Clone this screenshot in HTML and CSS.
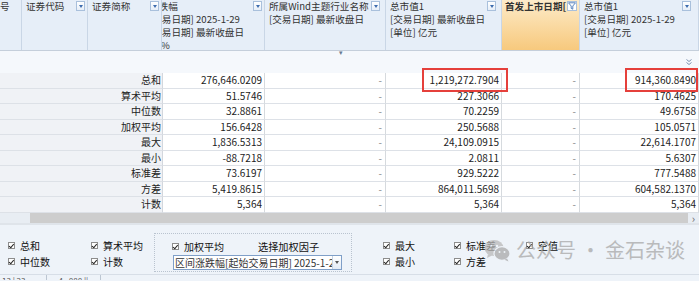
FILE: index.html
```html
<!DOCTYPE html>
<html lang="zh-CN">
  <head>
    <meta charset="UTF-8">
    <title>统计汇总</title>
    <link rel="stylesheet" href="styles.css">
  </head>
  <body>

    <div class="sheet">
      <div class="head">
        <div class="hcell c-no">号</div>
        <div class="hcell">证券代码<i class="dd"></i></div>
        <div class="hcell">证券简称<i class="dd"></i></div>
        <div class="hcell">
          <div class="shift">涨跌幅<br>[交易日期] 2025-1-29<br>[交易日期] 最新收盘日<br><span class="pct">%</span></div>
          <i class="dd"></i>
        </div>
        <div class="hcell">所属Wind主题行业名称<br>[交易日期] 最新收盘日<i class="dd dd-5"></i></div>
        <div class="hcell">总市值1<br>[交易日期] 最新收盘日<br>[单位] 亿元<i class="dd dd-5"></i></div>
        <div class="hcell hot"><b>首发上市日期[</b>
          <i class="filter">
            <svg width="8" height="8" viewBox="0 0 8 8"><path d="M0.5 0.8h7L4.8 4v3.2L3.2 6.4V4z" fill="none" stroke="#4a78b8" stroke-width="0.9"/></svg>
          </i>
        </div>
        <div class="hcell">总市值1<br>[交易日期] 2025-1-29<br>[单位] 亿元<i class="dd dd-7"></i></div>
      </div>

      <div class="subhead">
        <span class="tick">▾</span>
        <span class="collapse">
          <svg width="8" height="8" viewBox="0 0 8 8"><path d="M1.5 1.5l2.5 2 2.5-2M1.5 4.5l2.5 2 2.5-2" fill="none" stroke="#7d93b0" stroke-width="1"/></svg>
        </span>
      </div>

      <div class="rows">
        <div class="row"><div class="lbl">总和</div><div class="num">276,646.0209</div><div class="num dash">-</div><div class="num">1,219,272.7904</div><div class="num dash">-</div><div class="num">914,360.8490</div></div>
        <div class="row"><div class="lbl">算术平均</div><div class="num">51.5746</div><div class="num dash">-</div><div class="num">227.3066</div><div class="num dash">-</div><div class="num">170.4625</div></div>
        <div class="row"><div class="lbl">中位数</div><div class="num">32.8861</div><div class="num dash">-</div><div class="num">70.2259</div><div class="num dash">-</div><div class="num">49.6758</div></div>
        <div class="row"><div class="lbl">加权平均</div><div class="num">156.6428</div><div class="num dash">-</div><div class="num">250.5688</div><div class="num dash">-</div><div class="num">105.0571</div></div>
        <div class="row"><div class="lbl">最大</div><div class="num">1,836.5313</div><div class="num dash">-</div><div class="num">24,109.0915</div><div class="num dash">-</div><div class="num">22,614.1707</div></div>
        <div class="row"><div class="lbl">最小</div><div class="num">-88.7218</div><div class="num dash">-</div><div class="num">2.0811</div><div class="num dash">-</div><div class="num">5.6307</div></div>
        <div class="row"><div class="lbl">标准差</div><div class="num">73.6197</div><div class="num dash">-</div><div class="num">929.5222</div><div class="num dash">-</div><div class="num">777.5488</div></div>
        <div class="row"><div class="lbl">方差</div><div class="num">5,419.8615</div><div class="num dash">-</div><div class="num">864,011.5698</div><div class="num dash">-</div><div class="num">604,582.1370</div></div>
        <div class="row"><div class="lbl">计数</div><div class="num">5,364</div><div class="num dash">-</div><div class="num">5,364</div><div class="num dash">-</div><div class="num">5,364</div></div>
      </div>

      <div class="hscroll">
        <div class="track-left"></div>
        <div class="thumb"></div>
        <div class="arrow">›</div>
      </div>

      <!-- highlight marks -->
      <div class="mark mark-a"></div>
      <div class="mark mark-b"></div>
    </div>

    <div class="panel">
      <div class="opts">
        <div class="col col-1">
          <label><i class="cb"></i>总和</label>
          <label><i class="cb"></i>中位数</label>
        </div>
        <div class="col col-2">
          <label><i class="cb"></i>算术平均</label>
          <label><i class="cb"></i>计数</label>
        </div>
        <div class="group">
          <div class="group-top">
            <label><i class="cb"></i>加权平均</label>
            <span class="factor">选择加权因子</span>
          </div>
          <div class="select">
            <span class="select-text">区间涨跌幅[起始交易日期] 2025-1-29</span>
            <span class="select-btn"></span>
          </div>
        </div>
        <div class="col col-3">
          <label><i class="cb"></i>最大</label>
          <label><i class="cb"></i>最小</label>
        </div>
        <div class="col col-4">
          <label><i class="cb"></i>标准差</label>
          <label><i class="cb"></i>方差</label>
        </div>
        <div class="col col-5">
          <label><i class="cb"></i>空值</label>
        </div>
      </div>
      <div class="status">
        <span>13 | 23</span>
        <span class="tab">4 : 888 ||</span>
      </div>

      <div class="watermark">
        <svg width="27" height="23" viewBox="0 0 27 23">
          <ellipse cx="10" cy="9" rx="9.5" ry="8" fill="#b9b9b9"/>
          <path d="M4 15l-1 4 5-2.5z" fill="#b9b9b9"/>
          <ellipse cx="18" cy="14.5" rx="8" ry="6.8" fill="#a9a9a9" stroke="#eef3f9" stroke-width="1.2"/>
          <path d="M23 19.5l1.5 3-4-1.8z" fill="#a9a9a9"/>
          <circle cx="7" cy="7" r="1.2" fill="#eef3f9"/>
          <circle cx="13" cy="7" r="1.2" fill="#eef3f9"/>
          <circle cx="15.5" cy="13" r="1" fill="#eef3f9"/>
          <circle cx="20.5" cy="13" r="1" fill="#eef3f9"/>
        </svg>
        <span>公众号 · 金石杂谈</span>
      </div>
    </div>

  </body>
</html>
```

FILE: styles.css
```css
/* Base */
* {
  box-sizing: border-box;
}

body {
  margin: 0;
  width: 699px;
  height: 281px;
  overflow: hidden;
  font-family: "Noto Sans CJK SC", "Liberation Sans", sans-serif;
  font-size: 10px;
  color: #222;
  background-color: #eef3f9;
}

/* Sheet */
.sheet {
  position: relative;
  background-color: #fff;
}

.head {
  display: grid;
  grid-template-columns: 22px 66px 74px 103px 121px 116px 78px 119px;
  height: 51px;
  background-color: #e6eef8;
  border-bottom: 1px solid #c5cfdb;
}

.hcell {
  position: relative;
  overflow: hidden;
  padding: 0 0 0 4px;
  border-right: 1px solid #c9d6e6;
  font-size: 9.6px;
  line-height: 13px;
  color: #333;
  white-space: nowrap;
}

.c-no {
  padding-left: 0;
}

.shift {
  margin-left: -17px;
}

.pct {
  padding-left: 12px;
}

.dd {
  position: absolute;
  top: 1px;
  right: 2px;
  width: 9px;
  height: 10px;
  border: 1px solid #a9c0dc;
  background: linear-gradient(#ffffff, #e6eef8);
}

.dd::after {
  content: "";
  position: absolute;
  left: 2px;
  top: 3px;
  border-left: 2.5px solid transparent;
  border-right: 2.5px solid transparent;
  border-top: 3px solid #3e6cae;
}

.dd-5 {
  right: 5px;
}

.dd-7 {
  right: 7px;
}

.hot {
  background: linear-gradient(#fdebc9, #f7c97d);
  padding-left: 3px;
}

.hot b {
  font-weight: 700;
}

.filter {
  position: absolute;
  top: 1px;
  right: 2px;
  width: 10px;
  height: 10px;
  border: 1px solid #a9c0dc;
  background-color: #fff;
  display: flex;
  align-items: center;
  justify-content: center;
}

.subhead {
  position: relative;
  height: 22px;
  background-color: #f5f8fc;
}

.tick {
  position: absolute;
  left: 339px;
  top: -4px;
  font-size: 7px;
  color: #6a7a90;
}

.collapse {
  position: absolute;
  right: 5px;
  top: 6px;
  width: 10px;
  height: 10px;
  display: flex;
  align-items: center;
  justify-content: center;
}

/* Rows */
.row {
  display: grid;
  grid-template-columns: 163px 102px 121px 116px 78px 119px;
  height: 15.5px;
  line-height: 14.5px;
}

.lbl {
  text-align: right;
  padding-right: 1px;
  background-color: #f0f2f6;
  border-bottom: 1px solid #dde1e7;
  border-right: 1px solid #d3d7dd;
}

.num {
  text-align: right;
  padding-right: 2px;
  border-bottom: 1px solid #dde1e7;
  border-right: 1px solid #d6dade;
  white-space: nowrap;
  overflow: hidden;
}

.dash {
  color: #888;
  padding-right: 3px;
}

.hscroll {
  display: flex;
  height: 12.5px;
  background-color: #e8edf3;
  border-bottom: 2px solid #dfe4ea;
}

.track-left {
  width: 30px;
}

.thumb {
  flex: 1;
  background-color: #cdcdcd;
}

.arrow {
  width: 11px;
  font-size: 11px;
  line-height: 10px;
  text-align: center;
  color: #666;
}

.mark {
  position: absolute;
  top: 68px;
  height: 24px;
  border: 2.5px solid #e5403b;
}

.mark-a {
  left: 422px;
  width: 86px;
}

.mark-b {
  left: 625px;
  width: 73px;
}

/* Options panel */
.panel {
  position: relative;
  height: 55px;
  display: flex;
  flex-direction: column;
}

.opts {
  display: flex;
  height: 50px;
  padding-left: 8px;
}

.col {
  display: flex;
  flex-direction: column;
  padding-top: 13px;
}

.col label,
.group label {
  display: flex;
  align-items: center;
  height: 15.7px;
  font-size: 10px;
  color: #111;
}

.col-1 {
  width: 83px;
}

.col-2 {
  width: 63px;
}

.col-3 {
  width: 71px;
  margin-left: 31px;
}

.col-4 {
  width: 72px;
}

.cb {
  width: 7px;
  height: 7px;
  margin-right: 5px;
  border: 1px solid #8d8d8d;
  background-color: #fff;
  position: relative;
}

.cb::after {
  content: "";
  position: absolute;
  left: 1px;
  top: 0;
  width: 2px;
  height: 3.5px;
  border-right: 1.2px solid #222;
  border-bottom: 1.2px solid #222;
  transform: rotate(40deg);
}

.group {
  width: 198px;
  margin-top: 8px;
  height: 39px;
  border: 1px dotted #b9c3cf;
  padding: 5px 0 0 17px;
}

.group-top {
  display: flex;
  align-items: center;
}

.group-top label {
  width: 86px;
}

.factor {
  font-size: 10.2px;
  color: #111;
}

.select {
  display: flex;
  width: 169px;
  height: 15px;
  margin-left: 1px;
  border: 1px solid #7f9fc8;
  background-color: #fff;
}

.select-text {
  flex: 1;
  overflow: hidden;
  white-space: nowrap;
  line-height: 13px;
  padding-left: 1px;
  color: #333;
}

.select-btn {
  position: relative;
  width: 9px;
  border-left: 1px solid #c5d3e5;
  background: linear-gradient(#ffffff, #e4ecf6);
}

.select-btn::after {
  content: "";
  position: absolute;
  left: 2px;
  top: 5px;
  border-left: 2.5px solid transparent;
  border-right: 2.5px solid transparent;
  border-top: 3px solid #555;
}

.status {
  display: flex;
  height: 6px;
  overflow: hidden;
  font-size: 8px;
  line-height: 12px;
  color: #555;
  padding-left: 2px;
  border-top: 1px solid #d7dee7;
}

.status .tab {
  margin-left: 20px;
  padding: 0 12px;
  border-left: 1px solid #bcc6d2;
  border-right: 1px solid #bcc6d2;
}

/* Watermark overlay */
.watermark {
  position: absolute;
  left: 484px;
  top: 13px;
  display: flex;
  align-items: center;
  gap: 5px;
  white-space: nowrap;
  opacity: 0.75;
}

.watermark span {
  font-size: 20px;
  line-height: 24px;
  color: #a8a8a8;
}
```
